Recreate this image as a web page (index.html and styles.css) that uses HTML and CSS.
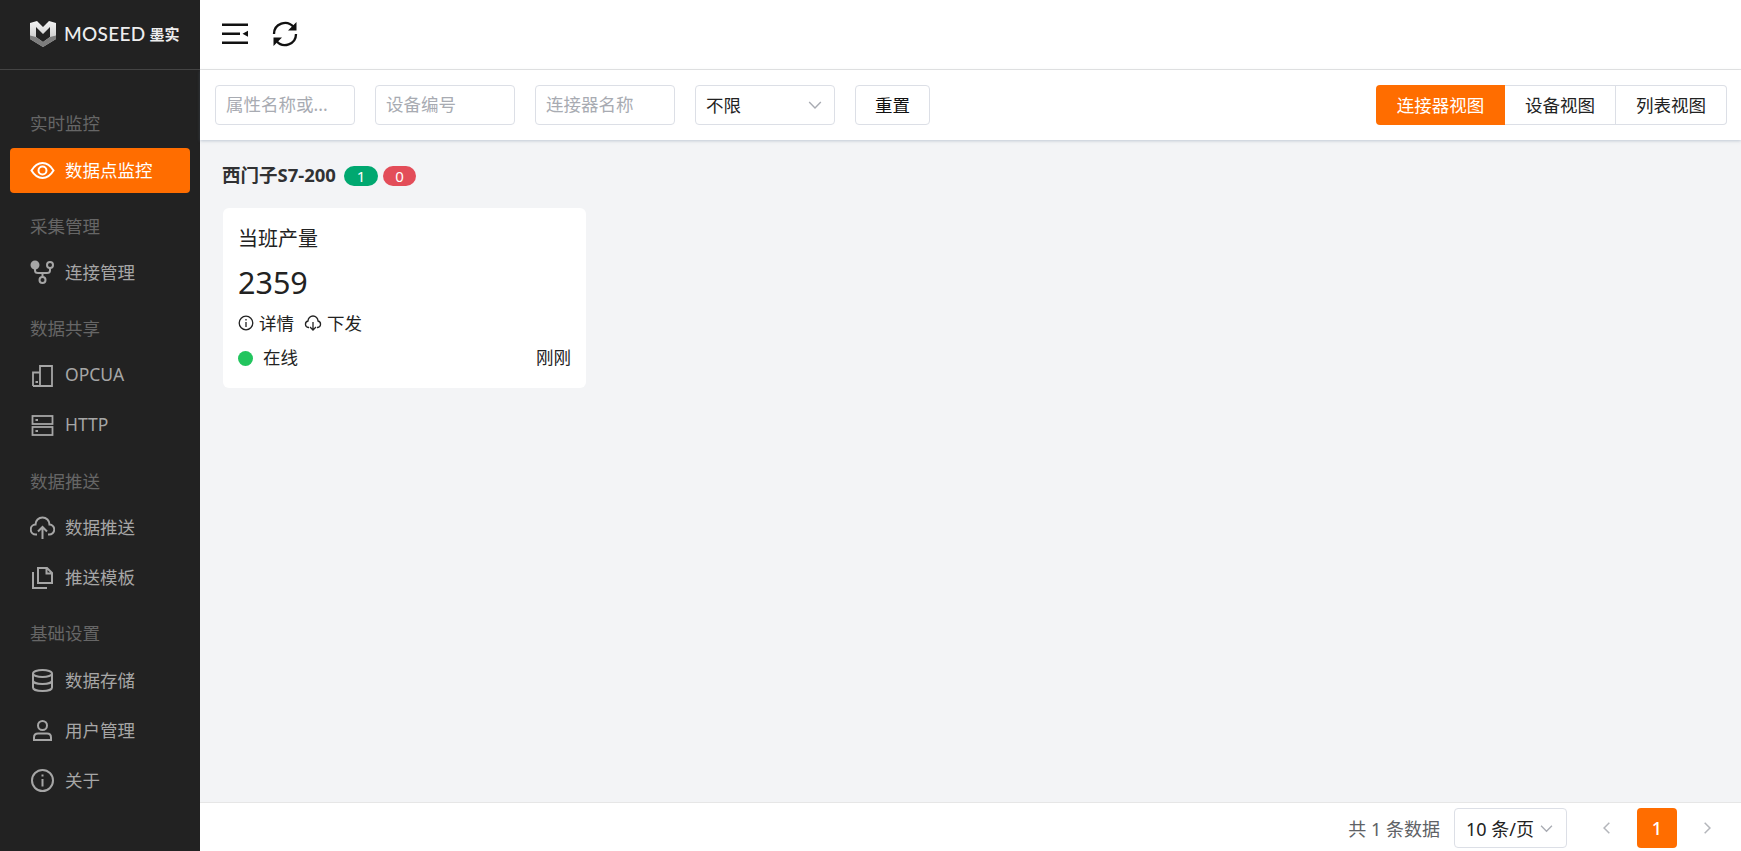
FILE: index.html
```
<!DOCTYPE html>
<html lang="zh-CN">
<head>
<meta charset="utf-8">
<title>MOSEED 墨实</title>
<link rel="stylesheet" href="styles.css">
</head>
<body>
<div class="app">
  <aside class="sidebar">
    <div class="brand">
      <svg class="brand-mark" viewBox="0 0 26 26">
        <defs>
          <linearGradient id="mk" x1="0" y1="0" x2="0" y2="1">
            <stop offset="0" stop-color="#f4f4f4"/><stop offset=".6" stop-color="#d0d0d0"/><stop offset="1" stop-color="#bbb"/>
          </linearGradient>
        </defs>
        <path fill="url(#mk)" fill-rule="evenodd" d="M0 2 7 0 13 6 19 0 26 2V18L13 26 0 18ZM6 6V16L13 21 20 16V6L13 13Z"/>
        <path fill="#7d7d7d" d="M0 14.500 6 16 13 21 20 16 26 14.500V18L13 26 0 18Z"/>
      </svg>
      <span class="brand-name">MOSEED</span>
      <span class="brand-cn">墨实</span>
    </div>
    <nav class="menu">
      <div class="group">实时监控</div>
      <a class="item active">
        <svg class="ico" viewBox="0 0 25 25" fill="none" stroke="currentColor" stroke-width="2"><path d="M1.500 12.500C4.500 7.500 8 5 12.500 5S20.500 7.500 23.500 12.500C20.500 17.500 17 20 12.500 20S4.500 17.500 1.500 12.500Z"/><circle cx="12.500" cy="12.500" r="4"/></svg>
        <span>数据点监控</span>
      </a>
      <div class="group">采集管理</div>
      <a class="item">
        <svg class="ico" viewBox="0 0 25 25" fill="none" stroke="currentColor" stroke-width="2"><circle cx="5" cy="5" r="3.500" fill="currentColor"/><circle cx="20" cy="5" r="3"/><circle cx="12.500" cy="20" r="3"/><path d="M5 8.500V10.500Q5 13 8 13H17Q20 13 20 10.500V8M12.500 13V17"/></svg>
        <span>连接管理</span>
      </a>
      <div class="group">数据共享</div>
      <a class="item">
        <svg class="ico" viewBox="0 0 25 25" fill="none" stroke="currentColor" stroke-width="1.800"><path d="M3 23V9.500H10M10 23V3H22V23H3"/><rect x="5.500" y="18" width="2.500" height="2" fill="currentColor" stroke="none"/></svg>
        <span>OPCUA</span>
      </a>
      <a class="item">
        <svg class="ico" viewBox="0 0 25 25" fill="none" stroke="currentColor" stroke-width="1.800"><rect x="2.500" y="3" width="20" height="8"/><rect x="2.500" y="14" width="20" height="8"/><path d="M5.500 7H8M5.500 18H8"/></svg>
        <span>HTTP</span>
      </a>
      <div class="group">数据推送</div>
      <a class="item">
        <svg class="ico" viewBox="0 0 25 25" fill="none" stroke="currentColor" stroke-width="2"><path d="M7 19.500H6A5 5 0 0 1 5.500 9.500 7 7 0 0 1 19.500 9.500 5 5 0 0 1 19 19.500H18M12.500 24V12M8 16.500 12.500 12 17 16.500"/></svg>
        <span>数据推送</span>
      </a>
      <a class="item">
        <svg class="ico" viewBox="0 0 25 25" fill="none" stroke="currentColor" stroke-width="2"><path d="M8 3H17L22 8V18H8ZM16.500 3V8.500H22M3 7V23H17"/></svg>
        <span>推送模板</span>
      </a>
      <div class="group">基础设置</div>
      <a class="item">
        <svg class="ico" viewBox="0 0 25 25" fill="none" stroke="currentColor" stroke-width="2"><ellipse cx="12.500" cy="5.500" rx="9.500" ry="3.500"/><path d="M3 5.500V19.500C3 21.500 7 23 12.500 23S22 21.500 22 19.500V5.500M3 12.500C3 14.500 7 16 12.500 16S22 14.500 22 12.500"/></svg>
        <span>数据存储</span>
      </a>
      <a class="item">
        <svg class="ico" viewBox="0 0 25 25" fill="none" stroke="currentColor" stroke-width="2"><circle cx="12.500" cy="7.500" r="4.500"/><path d="M4 22V19.500Q4 15.500 8 15.500H17Q21 15.500 21 19.500V22Z"/></svg>
        <span>用户管理</span>
      </a>
      <a class="item">
        <svg class="ico" viewBox="0 0 25 25" fill="none" stroke="currentColor" stroke-width="2"><circle cx="12.500" cy="12.500" r="10.500"/><path d="M12.500 11V18.500M12.500 6.500V8.500"/></svg>
        <span>关于</span>
      </a>
    </nav>
  </aside>
  <main class="main">
    <header class="topbar">
      <svg class="top-ico" viewBox="0 0 26 26"><path fill="#111" d="M0 2.500H26V5H0ZM0 11.500H18V14H0ZM0 20.500H26V23H0ZM20.500 12.800 26 9.800V15.800Z"/></svg>
      <svg class="top-ico" viewBox="0 0 26 26" fill="none" stroke="#111" stroke-width="2.300"><path d="M2 13A11 11 0 0 1 21.500 6"/><path d="M24 13A11 11 0 0 1 4.500 20"/><path fill="#111" stroke="none" d="M24.500 1V9.500H16ZM1.500 25V16.500H10Z"/></svg>
    </header>
    <section class="toolbar">
      <input class="field" placeholder="属性名称或...">
      <input class="field" placeholder="设备编号">
      <input class="field" placeholder="连接器名称">
      <div class="select">
        <span>不限</span>
        <svg class="chev" viewBox="0 0 12 12" fill="none" stroke="#a8abb2" stroke-width="1.200"><path d="M1 3.500 6 8.500 11 3.500"/></svg>
      </div>
      <button class="btn">重置</button>
      <div class="views">
        <button class="view view-a on">连接器视图</button>
        <button class="view view-b">设备视图</button>
        <button class="view view-c">列表视图</button>
      </div>
    </section>
    <section class="content">
      <div class="conn">
        <strong class="conn-name">西门子S7-200</strong>
        <span class="pill green">1</span>
        <span class="pill red">0</span>
      </div>
      <div class="cards">
        <article class="card">
          <div class="card-title">当班产量</div>
          <div class="card-value">2359</div>
          <div class="card-actions">
            <span class="act">
              <svg class="act-ico" viewBox="0 0 16 16" fill="none" stroke="#222" stroke-width="1.300"><circle cx="8" cy="8" r="6.800"/><path d="M8 7V12M8 4V5.500"/></svg>详情
            </span>
            <span class="act">
              <svg class="act-ico wide" viewBox="0 0 18 16" fill="none" stroke="#222" stroke-width="1.300"><path d="M5 12.500H4.500A3.300 3.300 0 0 1 4 6 5 5 0 0 1 14 6 3.300 3.300 0 0 1 13.500 12.500H13M9 7V15M6 12 9 15 12 12"/></svg>下发
            </span>
          </div>
          <div class="card-foot">
            <span class="status"><i class="dot"></i>在线</span>
            <span>刚刚</span>
          </div>
        </article>
      </div>
    </section>
    <footer class="pager">
      <span class="total">共 1 条数据</span>
      <div class="size">
        <span>10 条/页</span>
        <svg class="chev small" viewBox="0 0 12 12" fill="none" stroke="#a8abb2" stroke-width="1.200"><path d="M1 3.500 6 8.500 11 3.500"/></svg>
      </div>
      <svg class="arrow" viewBox="0 0 12 12" fill="none" stroke="#b4b6bb" stroke-width="1.300"><path d="M8 1.500 3.500 6 8 10.500"/></svg>
      <span class="page">1</span>
      <svg class="arrow" viewBox="0 0 12 12" fill="none" stroke="#b4b6bb" stroke-width="1.300"><path d="M4 1.500 8.500 6 4 10.500"/></svg>
    </footer>
  </main>
</div>
</body>
</html>
```
FILE: styles.css
```
* { box-sizing: border-box; }
html, body { margin: 0; height: 100%; }
body {
  font-family: "Noto Sans", "Noto Sans CJK SC", sans-serif;
  font-size: 17.5px;
  color: #222;
  overflow: hidden;
}
.app { display: flex; height: 851px; }

.sidebar { width: 200px; flex: none; background: #222; display: flex; flex-direction: column; }
.brand {
  height: 70px;
  border-bottom: 1px solid #444;
  display: flex;
  align-items: center;
  padding-left: 30px;
  padding-bottom: 2px;
  color: #eee;
}
.brand-mark { width: 26px; height: 26px; margin-right: 8px; }
.brand-name { font-family: Lato, sans-serif; font-size: 19px; font-weight: 500; letter-spacing: .3px; line-height: 26px; }
.brand-cn { font-family: "Noto Sans CJK SC", sans-serif; font-size: 15px; font-weight: 700; margin-left: 4px; line-height: 26px; }
.menu { padding: 25px 10px 0; }
.group { height: 52.5px; padding: 18px 0 0 20px; line-height: 21px; color: #666; }
.item {
  display: flex;
  align-items: center;
  gap: 10px;
  height: 45px;
  margin-bottom: 5px;
  padding-left: 20px;
  border-radius: 4px;
  color: #a6a6a6;
}
.item span { margin-bottom: 2px; }
.item.active { background: #ff6d00; color: #fff; }
.ico { width: 25px; height: 25px; flex: none; }

.main { flex: 1; min-width: 0; display: flex; flex-direction: column; background: #f3f4f6; }
.topbar {
  height: 70px;
  flex: none;
  background: #fff;
  border-bottom: 1px solid #e6e6e6;
  display: flex;
  align-items: center;
  padding: 0 0 1px 22px;
  gap: 24px;
}
.top-ico { width: 26px; height: 26px; }

.toolbar {
  height: 70px;
  flex: none;
  background: #fff;
  display: flex;
  align-items: center;
  padding: 0 14px 0 15px;
  gap: 20px;
  box-shadow: 0 1px 3px rgba(100, 120, 150, .35);
  position: relative;
}
.field, .select, .btn, .size {
  height: 40px;
  border: 1px solid #dcdfe6;
  border-radius: 4px;
  background: #fff;
  font: inherit;
}
.field { width: 140px; padding: 0 10px 2px; outline: none; color: #222; }
.field::placeholder { color: #a8abb2; opacity: 1; }
.select {
  width: 140px;
  padding: 0 12px 0 10px;
  display: flex;
  align-items: center;
  justify-content: space-between;
}
.select span { margin-bottom: 2px; }
.chev { width: 14px; height: 14px; }
.chev.small { width: 13px; height: 13px; }
.btn { width: 75px; color: #111; padding: 0 0 2px; }
.views { display: flex; margin-left: auto; }
.view {
  height: 40px;
  padding: 0 0 2px;
  font: inherit;
  color: #222;
  background: #fff;
  border: 1px solid #dcdfe6;
  border-left: 0;
}
.view-a { width: 129px; border-radius: 4px 0 0 4px; border: 0; }
.view-b { width: 111px; }
.view-c { width: 111px; border-radius: 0 4px 4px 0; }
.view.on { background: #ff6d00; color: #fff; }

.content { flex: 1; min-height: 0; padding: 24px 23px 0; }
.conn { display: flex; align-items: center; height: 24px; }
.conn-name { font-size: 18.5px; font-weight: 700; color: #303133; line-height: 24px; margin: -2px 8px 0 -1px; }
.pill {
  height: 20px;
  border-radius: 10px;
  color: #fff;
  font-size: 15px;
  line-height: 20px;
  text-align: center;
}
.green { width: 34px; background: #00a870; margin-right: 5px; }
.red { width: 33px; background: #e34d59; }
.cards { display: grid; grid-template-columns: 363px; margin-top: 20px; }
.card { height: 180px; background: #fff; border-radius: 6px; padding: 20px 15px 0; }
.card-title { font-size: 20px; line-height: 22px; color: #222; }
.card-value { font-size: 30.5px; line-height: 44px; margin-top: 10px; color: #222; }
.card-actions { display: flex; gap: 10px; line-height: 22px; margin-top: 8px; }
.act { display: flex; align-items: center; gap: 5px; }
.act-ico { width: 16px; height: 16px; }
.act-ico.wide { width: 18px; }
.card-foot { display: flex; justify-content: space-between; line-height: 22px; margin-top: 12px; }
.status { display: flex; align-items: center; gap: 10px; }
.dot { width: 15px; height: 15px; border-radius: 50%; background: #22c55e; margin-top: 2px; }

.pager {
  height: 49px;
  flex: none;
  background: #fff;
  border-top: 1px solid #e6e6e6;
  display: flex;
  align-items: center;
  justify-content: flex-end;
  padding: 5px 0 3px;
  font-size: 18px;
}
.total { color: #606266; margin-right: 14px; }
.size {
  width: 113px;
  height: 40px;
  display: flex;
  align-items: center;
  gap: 6px;
  padding-left: 11px;
  margin-right: 33px;
  color: #222;
}
.arrow { width: 14px; height: 14px; }
.page {
  width: 40px;
  height: 40px;
  margin: 0 23px;
  background: #ff6d00;
  color: #fff;
  border-radius: 4px;
  text-align: center;
  line-height: 40px;
  font-weight: 500;
}
.pager .arrow:last-child { margin-right: 27px; }
```
